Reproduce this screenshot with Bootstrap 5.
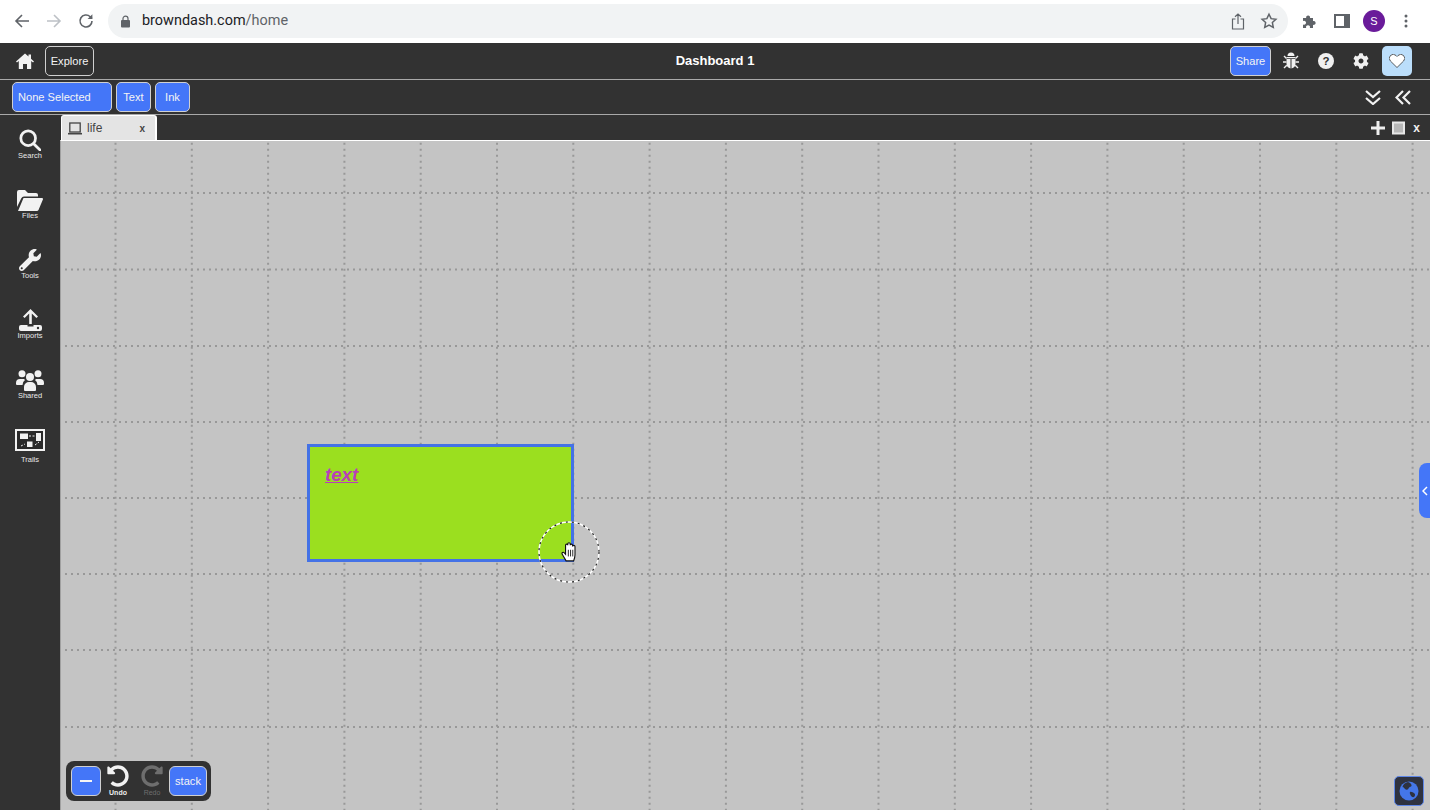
<!DOCTYPE html>
<html lang="en">
<head>
<meta charset="utf-8">
<title>browndash</title>
<link href="https://cdn.jsdelivr.net/npm/bootstrap@5.3.0/dist/css/bootstrap.min.css" rel="stylesheet">
<style>
html,body{height:100%;margin:0;overflow:hidden}
body{font-family:"Liberation Sans",Arial,sans-serif;background:#323232;color:#fff;width:1430px;height:810px}
.chromebar{height:43px;background:#fff;color:#5f6368;padding:0 22px 1px 13px;flex:none}
.chrome-ico{flex:none;display:block}
.chrome-gap{margin-left:14px}
.omni{flex:none;margin-left:13px;width:1180px;height:34px;border-radius:17px;background:#f1f3f4;padding:0 10px 0 12px}
.url{font-family:Roboto,"Liberation Sans",sans-serif;font-size:14.45px;color:#202124;margin-left:11px}
.url span{color:#5f6368}
.omni-star{margin-left:15px}
.ext-panel{margin-left:16px}
.avatar{width:22px;height:22px;border-radius:50%;background:#6a1b9a;color:#fff;font-size:11px;line-height:22px;text-align:center;margin-left:13px}
.chrome-dots{margin-left:19px}
.topbar{height:37px;background:#323232;border-bottom:1px solid #a9a9a9;padding:0 18px 1px 16px;position:relative;flex:none}
.dash-title{font-weight:700;font-size:13px;position:absolute;left:0;right:0;text-align:center;top:9px;line-height:18px;pointer-events:none}
.toolrow{height:35px;background:#323232;border-bottom:1px solid #a9a9a9;padding:0 19px 0 12px;flex:none}
.dbtn{--bs-btn-padding-x:0;--bs-btn-padding-y:0;font-size:11.1px;line-height:28px;height:30px;border-radius:5px;border:1px solid #d0d0d0;color:#f4f4f4;background:#4476f8;text-align:center;flex:none}
.dbtn:hover{color:#f4f4f4;background:#4476f8;border-color:#d0d0d0}
.btn-outline{background:#323232;width:49px;margin-left:11px}
.btn-outline:hover{background:#323232}
.btn-none{width:100px;text-align:left;padding-left:5px}
.btn-txt{width:35px}
.btn-share{width:41px;background:#4476f8}
.btn-heart{width:30px;background:#bbdefb;border:0;display:flex;align-items:center;justify-content:center;margin-left:13px}
.btn-heart:hover{background:#bbdefb}
.gap-bug{margin-left:12px}
.gap-tool{margin-left:19px}
.chev-gap{margin-left:14px}
.tabrow{height:25px;background:#323232;padding-left:1px;padding-right:10px;flex:none}
.life-tab{width:96px;height:25px;background:#e4e4e4;color:#444;border-top:1px solid #fff;border-right:2px solid #fff;border-left:1px solid #fff;border-radius:3px 3px 0 0;font-size:12px;padding:0 10px 0 6px}
.tab-label{margin-left:5px;font-size:12px}
.tab-close{font-size:10px;font-weight:700}
.row-icon{margin-top:6px}
.row-plus{margin-right:7px}
.row-x{font-size:12px;font-weight:700;line-height:15px;color:#eee;margin-left:1px}
.workarea{min-height:0;flex:1}
.sidepanel{width:60px;background:#323232;flex:none;padding-top:5px}
.side-item{height:60px;width:60px;font-size:7.5px;line-height:8px;color:#e8e8e8;text-align:center}
.side-item svg{display:block;margin:0 auto}
.side-icon{height:31px;display:flex;align-items:flex-end;justify-content:center}
.side-label{margin-top:1px}
.side-label-low{margin-top:5px}
.right-col{flex:1;min-width:0}
.canvas-area{flex:1;position:relative;background:#c4c4c4;border-top:1px solid #fff;border-left:1px solid #a0a0a0;overflow:hidden}
.grid-svg{position:absolute;left:0;top:0}
.green-node{position:absolute;left:246px;top:303px;width:267px;height:118px;background:#9bdf1f;border:3px solid #4472e6;color:#b93fb9;font-weight:700;font-style:italic;font-size:18.7px;text-decoration:underline;padding:15px 0 0 15px;line-height:25px}
.pointer-ring{position:absolute;left:477px;top:380px;width:62px;height:62px;display:flex;align-items:center;justify-content:center}
.ring-svg{position:absolute;left:0;top:0}
.hand-svg{position:relative;margin-left:1px}
.stack-panel{position:absolute;left:5px;top:620px;width:145px;height:40px;background:#323232;border-radius:8px;padding:0 4px 0 5px}
.stack-btn{height:30px;line-height:26px;border-radius:6px}
.btn-minus{width:30px;display:flex;align-items:center;justify-content:center}
.btn-stack{width:38px}
.undo-cell{width:34px;font-size:7px;line-height:8px;text-align:center;font-weight:700;flex:none;color:#eee;margin-top:-1px}
.undo-cell svg{display:block;margin:0 auto 2px}
.redo-cell{color:#6e6e6e;font-weight:400}
.side-handle{position:absolute;right:0;top:322px;width:11px;height:55px;background:#4476f8;border-radius:8px 0 0 8px;display:flex;align-items:center;padding-left:3px}
.globe-btn{position:absolute;left:1333px;top:635px;width:30px;height:30px;border-radius:5px;background:#2e3240;border:1px solid #5d86e8;display:flex;align-items:center;justify-content:center}
</style>
</head>
<body>
<div class="d-flex flex-column vh-100">
  <div class="chromebar d-flex align-items-center">
    <svg class="chrome-ico" width="18" height="18" viewBox="0 0 18 18" fill="none" stroke="#5f6368" stroke-width="1.6"><path d="M16 9H3M9 3 3 9l6 6"/></svg>
    <svg class="chrome-ico chrome-gap" width="18" height="18" viewBox="0 0 18 18" fill="none" stroke="#bdc1c6" stroke-width="1.6"><path d="M2 9h13M9 3l6 6-6 6"/></svg>
    <svg class="chrome-ico chrome-gap" width="18" height="18" viewBox="0 0 18 18" fill="none" stroke="#5f6368" stroke-width="1.6"><path d="M15 9a6 6 0 1 1-1.800-4.300L15 6.500"/><path d="M15.400 2.300v4.800h-4.800" fill="#5f6368" stroke="none"/></svg>
    <div class="omni d-flex align-items-center">
      <svg width="11" height="13" viewBox="0 0 11 13"><path d="M3 5V3.600a2.500 2.500 0 0 1 5 0V5" fill="none" stroke="#5f6368" stroke-width="1.200"/><rect x="1" y="5" width="9" height="7.500" rx="1" fill="#5f6368"/></svg>
      <span class="url">browndash.com<span>/home</span></span>
      <svg class="ms-auto" width="14" height="17" viewBox="0 0 14 17" fill="none" stroke="#5f6368" stroke-width="1.200"><path d="M4.500 6H1.500v10h11V6H9.500M7 11V1M4 3.800 7 1l3 2.800"/></svg>
      <svg class="omni-star" width="18" height="18" viewBox="0 0 24 24" fill="none" stroke="#5f6368" stroke-width="2"><path d="m12 3 2.800 5.900 6.400.8-4.700 4.400 1.200 6.400L12 17.400 6.300 20.500l1.200-6.400L2.800 9.700l6.400-.8z"/></svg>
    </div>
    <svg class="ms-auto" width="16" height="16" viewBox="0 0 16 16" fill="#5f6368"><path d="M1 5h3.200a2 2 0 1 1 3.800 0H11v3a2 2 0 1 1 0 3.800V15H7.800a2 2 0 1 0-3.600 0H1v-3.500a2 2 0 1 0 0-3.400z"/></svg>
    <svg class="ext-panel" width="16" height="14" viewBox="0 0 16 14"><rect x="1" y="1" width="14" height="12" fill="none" stroke="#5f6368" stroke-width="2"/><rect x="10" y="1" width="5" height="12" fill="#5f6368"/></svg>
    <div class="avatar">S</div>
    <svg class="chrome-dots" width="4" height="14" viewBox="0 0 4 14" fill="#5f6368"><circle cx="2" cy="2" r="1.500"/><circle cx="2" cy="7" r="1.500"/><circle cx="2" cy="12" r="1.500"/></svg>
  </div>

  <div class="topbar d-flex align-items-center">
    <svg width="18" height="16" viewBox="0 0 18 16" fill="#f2f2f2"><path d="M9 .500 0 8.500l1 1.100L2.800 8v7.500a.5.5 0 0 0 .5.5H7v-5h4v5h3.700a.5.5 0 0 0 .5-.5V8L17 9.600l1-1.100-3-2.700V1.500h-2.500v2.100z"/></svg>
    <button type="button" class="btn dbtn btn-outline">Explore</button>
    <div class="dash-title">Dashboard 1</div>
    <button type="button" class="btn dbtn btn-share ms-auto">Share</button>
    <svg class="gap-bug" width="16" height="17" viewBox="0 0 16 17" fill="#f0f0f0"><path d="M4.500 4a3.500 3.500 0 0 1 7 0zM3.500 5h9v1.200h-9zM3.500 7h4v9.500a5 5 0 0 1-4-5zM8.500 7h4v4.500a5 5 0 0 1-4 5z"/><path d="M1 4l2.500 2.500M15 4l-2.500 2.500M0 10h3.500M16 10h-3.500M1 16l2.800-2.800M15 16l-2.800-2.800" stroke="#f0f0f0" stroke-width="1.400"/></svg>
    <svg class="gap-tool" width="16" height="16" viewBox="0 0 16 16"><circle cx="8" cy="8" r="8" fill="#f0f0f0"/><text x="8" y="12" text-anchor="middle" font-family="Liberation Sans" font-weight="700" font-size="11.500" fill="#323232">?</text></svg>
    <svg class="gap-tool" width="16" height="16" viewBox="0 0 512 512" fill="#f0f0f0"><path d="M487.400 315.700l-42.600-24.600c4.300-23.200 4.300-47 0-70.200l42.600-24.600c4.900-2.800 7.100-8.600 5.500-14-11.100-35.600-30-67.800-54.700-94.600-3.800-4.100-10-5.100-14.800-2.300L380.800 110c-17.900-15.400-38.500-27.300-60.800-35.100V25.800c0-5.600-3.900-10.500-9.400-11.700-36.700-8.200-74.300-7.800-109.200 0-5.500 1.200-9.400 6.100-9.400 11.700V75c-22.200 7.900-42.800 19.800-60.800 35.100L88.700 85.500c-4.900-2.800-11-1.900-14.800 2.300-24.700 26.700-43.600 58.900-54.700 94.600-1.700 5.400.6 11.200 5.500 14L67.300 221c-4.300 23.200-4.300 47 0 70.200l-42.600 24.600c-4.900 2.800-7.100 8.600-5.500 14 11.100 35.600 30 67.800 54.700 94.600 3.800 4.100 10 5.100 14.800 2.300l42.600-24.600c17.900 15.400 38.500 27.300 60.800 35.100v49.200c0 5.600 3.900 10.500 9.400 11.700 36.700 8.200 74.300 7.800 109.200 0 5.500-1.200 9.400-6.100 9.400-11.700v-49.200c22.200-7.900 42.800-19.800 60.800-35.100l42.600 24.600c4.900 2.800 11 1.900 14.800-2.300 24.700-26.700 43.600-58.900 54.700-94.600 1.500-5.500-.7-11.300-5.600-14.100zM256 336c-44.100 0-80-35.900-80-80s35.900-80 80-80 80 35.900 80 80-35.900 80-80 80z"/></svg>
    <button type="button" class="btn dbtn btn-heart" aria-label="heart"><svg width="16" height="14" viewBox="0 0 16 14"><path d="M8 13.500 1.400 7A3.900 3.900 0 0 1 1.500 1.500a4 4 0 0 1 5.500 0L8 2.500l1-1a4 4 0 0 1 5.500 0A3.900 3.900 0 0 1 14.600 7z" fill="#fff" stroke="#222" stroke-width=".7"/></svg></button>
  </div>

  <div class="toolrow d-flex align-items-center">
    <button type="button" class="btn dbtn btn-none">None Selected</button>
    <button type="button" class="btn dbtn btn-txt ms-1">Text</button>
    <button type="button" class="btn dbtn btn-txt ms-1">Ink</button>
    <svg class="ms-auto" width="16" height="15" viewBox="0 0 16 15" fill="none" stroke="#f2f2f2" stroke-width="2.200"><path d="m1 1 7 6 7-6M1 8l7 6 7-6"/></svg>
    <svg class="chev-gap" width="16" height="15" viewBox="0 0 16 15" fill="none" stroke="#f2f2f2" stroke-width="2.200"><path d="M8 1 1.500 7.500 8 14M15 1 8.500 7.500 15 14"/></svg>
  </div>

  <div class="workarea d-flex">
    <div class="sidepanel d-flex flex-column">
      <div class="side-item"><div class="side-icon"><svg width="22" height="22" viewBox="0 0 24 24" fill="none" stroke="#f2f2f2" stroke-width="3"><circle cx="10" cy="10" r="8"/><path d="m16 16 7 7" stroke-linecap="round"/></svg></div><div class="side-label">Search</div></div>
      <div class="side-item"><div class="side-icon"><svg width="26" height="21" viewBox="0 0 26 21" fill="#f2f2f2"><path d="M0 2a2 2 0 0 1 2-2h6l3 3h8a2 2 0 0 1 2 2v1.500H7a3 3 0 0 0-2.700 1.700L0 17z"/><path d="M6.500 8H25a1 1 0 0 1 .9 1.400L21.500 20a2 2 0 0 1-1.800 1H1z"/></svg></div><div class="side-label">Files</div></div>
      <div class="side-item"><div class="side-icon"><svg width="22" height="22" viewBox="0 0 512 512" fill="#f2f2f2"><path d="M507.730 109.100c-2.240-9.030-13.540-12.090-20.120-5.510l-74.360 74.360-67.880-11.310-11.310-67.880 74.360-74.360c6.620-6.620 3.430-17.900-5.660-20.160-47.380-11.740-99.550.91-136.580 37.930-39.640 39.640-50.550 97.100-34.050 147.200L18.740 402.760c-24.990 24.990-24.990 65.510 0 90.500 24.990 24.990 65.510 24.990 90.500 0l213.210-213.210c50.120 16.710 107.470 5.680 147.370-34.220 37.070-37.070 49.700-89.320 37.910-136.730zM64 472c-13.250 0-24-10.750-24-24 0-13.260 10.750-24 24-24s24 10.740 24 24c0 13.250-10.750 24-24 24z"/></svg></div><div class="side-label">Tools</div></div>
      <div class="side-item"><div class="side-icon"><svg width="23" height="22" viewBox="0 0 23 22" fill="#f2f2f2"><path d="M11.500 0 19 7.500l-1.600 1.500-4.600-4.600V15h-2.600V4.400L5.600 9 4 7.500z"/><path d="M2 16h6.500v1.500h6V16H21a2 2 0 0 1 2 2v2a2 2 0 0 1-2 2H2a2 2 0 0 1-2-2v-2a2 2 0 0 1 2-2z"/><circle cx="19" cy="19" r="1.200" fill="#323232"/></svg></div><div class="side-label">Imports</div></div>
      <div class="side-item"><div class="side-icon"><svg width="28" height="21" viewBox="0 0 28 21" fill="#f2f2f2"><circle cx="6" cy="3.800" r="3.500"/><circle cx="22" cy="3.800" r="3.500"/><circle cx="14" cy="7" r="4"/><path d="M0 13a4 4 0 0 1 4-4h4l1 1a6 6 0 0 0-2.500 5H1a1 1 0 0 1-1-1zM28 13a4 4 0 0 0-4-4h-4l-1 1a6 6 0 0 1 2.500 5H27a1 1 0 0 0 1-1zM8 17a5 5 0 0 1 5-5h2a5 5 0 0 1 5 5v3a1 1 0 0 1-1 1H9a1 1 0 0 1-1-1z"/></svg></div><div class="side-label">Shared</div></div>
      <div class="side-item"><div class="side-icon"><svg width="30" height="22" viewBox="0 0 30 22"><rect x="1" y="1" width="28" height="20" fill="#2a2a2a" stroke="#f2f2f2" stroke-width="2"/><rect x="5" y="4.500" width="8" height="5.500" fill="#f2f2f2"/><rect x="21" y="4" width="5" height="8" fill="#f2f2f2"/><rect x="12" y="12.500" width="5.500" height="5.500" fill="#f2f2f2"/><path d="M14 7h6M6 17l4-2M20 16l4-3" stroke="#f2f2f2" stroke-dasharray="2 1.500"/></svg></div><div class="side-label-low">Trails</div></div>
    </div>

    <div class="right-col d-flex flex-column">
      <div class="tabrow d-flex">
        <div class="life-tab d-flex align-items-center">
          <svg width="14" height="13" viewBox="0 0 14 13" fill="none" stroke="#444" stroke-width="1.300"><rect x="1.800" y="1" width="10.400" height="9"/><path d="M0 11.700h14" stroke-width="1.600"/></svg>
          <span class="tab-label">life</span>
          <span class="tab-close ms-auto">x</span>
        </div>
        <svg class="ms-auto row-icon row-plus" width="14" height="14" viewBox="0 0 14 14" fill="#eee"><path d="M5.500 0h3v5.500H14v3H8.500V14h-3V8.500H0v-3h5.500z"/></svg>
        <svg class="row-icon row-plus" width="13" height="14" viewBox="0 0 13 14"><rect x="1" y="1.500" width="11" height="11" fill="#b8b8b8" stroke="#e8e8e8" stroke-width="2"/></svg>
        <span class="row-icon row-x">x</span>
      </div>

      <div class="canvas-area">
        <svg class="grid-svg" width="1369" height="669" stroke="#989898" stroke-width="2" stroke-dasharray="2 4" fill="none" aria-hidden="true">
          <path d="M54.500 1.700V669M130.800 1.700V669M207.100 1.700V669M283.400 1.700V669M359.700 1.700V669M436 1.700V669M512.300 1.700V669M588.600 1.700V669M664.900 1.700V669M741.200 1.700V669M817.500 1.700V669M893.800 1.700V669M970.100 1.700V669M1046.400 1.700V669M1122.700 1.700V669M1199 1.700V669M1275.300 1.700V669M1351.600 1.700V669"/>
          <path d="M4 52H1369M4 128.500H1369M4 205H1369M4 281H1369M4 357H1369M4 433H1369M4 509H1369M4 586H1369"/>
        </svg>
        <div class="green-node">text</div>
        <div class="pointer-ring">
          <svg class="ring-svg" width="62" height="62" viewBox="0 0 62 62" fill="none"><circle cx="31" cy="31" r="30" stroke="#fff" stroke-width="1.500"/><circle cx="31" cy="31" r="30" stroke="#222" stroke-width="1.200" stroke-dasharray="2 4"/></svg>
          <svg class="hand-svg" width="18" height="20" viewBox="0 0 16 18"><path d="M4.500 17 1 11c-.7-1.200.8-2.400 1.900-1.300L4 11V3c0-1.500 2-1.500 2 0V1.800c0-1.500 2.200-1.500 2.200 0V3c0-1.400 2.100-1.400 2.100 0v1c0-1.300 2.200-1.300 2.200 0v7.500c0 2-.5 3.500-1.200 5.500z" fill="#fff" stroke="#111" stroke-width="1"/><path d="M6.500 7v6M8.500 7v6M10.500 7v6" stroke="#111" stroke-width=".8"/></svg>
        </div>
        <div class="stack-panel d-flex align-items-center">
          <button type="button" class="btn dbtn stack-btn btn-minus" aria-label="minus"><svg width="12" height="2" viewBox="0 0 12 2"><rect width="12" height="2" fill="#f4f4f4"/></svg></button>
          <div class="undo-cell"><svg width="22" height="22" viewBox="0 0 512 512" fill="#f2f2f2"><path d="M255.545 8c-66.269.119-126.438 26.233-170.860 68.685L48.971 40.971C33.851 25.851 8 36.559 8 57.941V192c0 13.255 10.745 24 24 24h134.059c21.382 0 32.090-25.851 16.971-40.971l-41.750-41.750c30.864-28.899 70.801-44.907 113.230-45.273 92.398-.798 170.283 73.977 169.484 169.442C423.236 348.009 349.816 424 256 424c-41.127 0-79.997-14.678-110.630-41.556-4.743-4.161-11.906-3.908-16.368.553L89.340 422.659c-4.872 4.872-4.631 12.815.482 17.433C133.798 479.813 192.074 504 256 504c136.966 0 247.999-111.033 248-247.998C504.001 119.193 392.354 7.755 255.545 8z"/></svg>Undo</div>
          <div class="undo-cell redo-cell"><svg width="22" height="22" viewBox="0 0 512 512" fill="#6e6e6e"><g transform="matrix(-1 0 0 1 512 0)"><path d="M255.545 8c-66.269.119-126.438 26.233-170.860 68.685L48.971 40.971C33.851 25.851 8 36.559 8 57.941V192c0 13.255 10.745 24 24 24h134.059c21.382 0 32.090-25.851 16.971-40.971l-41.750-41.750c30.864-28.899 70.801-44.907 113.230-45.273 92.398-.798 170.283 73.977 169.484 169.442C423.236 348.009 349.816 424 256 424c-41.127 0-79.997-14.678-110.630-41.556-4.743-4.161-11.906-3.908-16.368.553L89.340 422.659c-4.872 4.872-4.631 12.815.482 17.433C133.798 479.813 192.074 504 256 504c136.966 0 247.999-111.033 248-247.998C504.001 119.193 392.354 7.755 255.545 8z"/></g></svg>Redo</div>
          <button type="button" class="btn dbtn stack-btn btn-stack">stack</button>
        </div>
        <div class="side-handle"><svg width="6" height="10" viewBox="0 0 6 10" fill="none" stroke="#fff" stroke-width="1.500"><path d="M5 1 1 5l4 4"/></svg></div>
        <div class="globe-btn"><svg width="20" height="20" viewBox="0 0 20 20"><circle cx="10" cy="10" r="9.500" fill="#4476e8"/><path d="M9 1c2.500 1 4 2.500 3.500 4-.5 1-2.500 1-3 2.500-.6 1.500-2.500 1.500-3.500.5-1-1-1-2-2.500-2C4 3.500 6 1.500 9 1zM11 11c1.500-.5 3 .5 4.500 1.500 1 1 .5 2.500-.5 3.500-1.500.5-3-.5-3.500-2-.5-1-1-2-.5-3z" fill="#2e3240"/></svg></div>
      </div>
    </div>
  </div>
</div>
<script src="https://cdn.jsdelivr.net/npm/bootstrap@5.3.0/dist/js/bootstrap.bundle.min.js"></script>
</body>
</html>
